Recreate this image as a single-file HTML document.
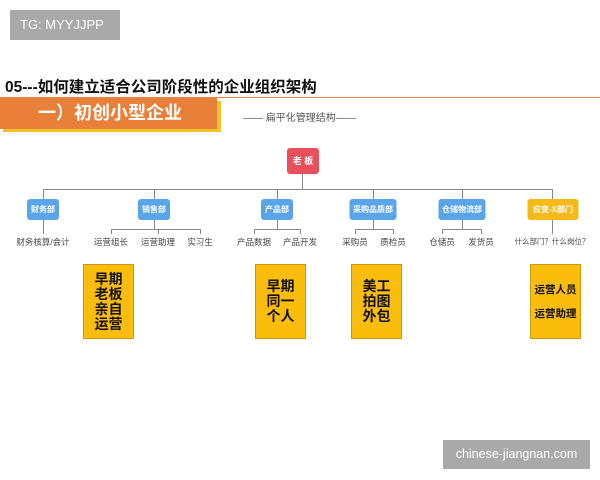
<!DOCTYPE html>
<html><head><meta charset="utf-8"><style>
*{margin:0;padding:0;box-sizing:border-box}
body{width:600px;height:480px;background:#fff;position:relative;overflow:hidden;font-family:"Liberation Sans","Noto Sans CJK SC",sans-serif}
.a{position:absolute}
.dept{position:absolute;top:199px;height:21px;background:#5aa5ea;color:#fff;font-size:8px;font-weight:bold;border-radius:3px;text-align:center;line-height:21px;transform:translateX(-50%)}
.ln{position:absolute;background:#888}
.lab{position:absolute;top:236px;font-size:8.5px;color:#444;transform:translateX(-50%);white-space:nowrap}
.yb{position:absolute;top:264px;width:51px;height:75px;background:#fbbd0b;border:1px solid #c99a10;font-weight:bold;color:#111;text-align:center;font-size:14px;line-height:15px;display:flex;flex-direction:column;justify-content:center}
</style></head><body>
<div class="a" style="left:10px;top:10px;width:110px;height:30px;background:#a9a9a9;color:#fff;font-size:13px;line-height:30px;padding-left:10px">TG: MYYJJPP</div>
<div class="a" style="left:5px;top:75px;font-size:15.5px;font-weight:bold;color:#111;white-space:nowrap">05---如何建立适合公司阶段性的企业组织架构</div>
<div class="a" style="left:0;top:97px;width:600px;height:1px;background:#e8884a"></div>
<div class="a" style="left:3px;top:101px;width:218px;height:31px;background:#f6c12a"></div>
<div class="a" style="left:0;top:98px;width:217px;height:31px;background:#e8803a;color:#fff;font-size:18px;font-weight:bold;line-height:31px;padding-left:38px">一）初创小型企业</div>
<div class="a" style="left:243px;top:109px;font-size:10px;color:#555;white-space:nowrap">—— 扁平化管理结构——</div>
<div class="a" style="left:287px;top:148px;width:32px;height:26px;background:#e8505b;border-radius:3px;color:#fff;font-size:9px;font-weight:bold;text-align:center;line-height:26px">老 板</div>
<div class="ln" style="left:302px;top:174px;width:1px;height:15px"></div>
<div class="ln" style="left:43px;top:189px;width:510px;height:1px"></div>
<div class="ln" style="left:43px;top:189px;width:1px;height:10px"></div>
<div class="ln" style="left:154px;top:189px;width:1px;height:10px"></div>
<div class="ln" style="left:277px;top:189px;width:1px;height:10px"></div>
<div class="ln" style="left:373px;top:189px;width:1px;height:10px"></div>
<div class="ln" style="left:462px;top:189px;width:1px;height:10px"></div>
<div class="ln" style="left:552px;top:189px;width:1px;height:10px"></div>
<div class="dept" style="left:43px;width:32px">财务部</div>
<div class="dept" style="left:154px;width:32px">销售部</div>
<div class="dept" style="left:277px;width:32px">产品部</div>
<div class="dept" style="left:373px;width:47px">采购品质部</div>
<div class="dept" style="left:462px;width:47px">仓储物流部</div>
<div class="dept" style="left:553px;width:51px;background:#f6b91a">应变-X部门</div>
<!-- sub lines -->
<div class="ln" style="left:43px;top:220px;width:1px;height:14px"></div>
<div class="ln" style="left:154px;top:220px;width:1px;height:9px"></div>
<div class="ln" style="left:111px;top:229px;width:89px;height:1px"></div>
<div class="ln" style="left:111px;top:229px;width:1px;height:5px"></div>
<div class="ln" style="left:158px;top:229px;width:1px;height:5px"></div>
<div class="ln" style="left:200px;top:229px;width:1px;height:5px"></div>
<div class="ln" style="left:277px;top:220px;width:1px;height:9px"></div>
<div class="ln" style="left:254px;top:229px;width:47px;height:1px"></div>
<div class="ln" style="left:254px;top:229px;width:1px;height:5px"></div>
<div class="ln" style="left:300px;top:229px;width:1px;height:5px"></div>
<div class="ln" style="left:373px;top:220px;width:1px;height:9px"></div>
<div class="ln" style="left:355px;top:229px;width:39px;height:1px"></div>
<div class="ln" style="left:355px;top:229px;width:1px;height:5px"></div>
<div class="ln" style="left:393px;top:229px;width:1px;height:5px"></div>
<div class="ln" style="left:462px;top:220px;width:1px;height:9px"></div>
<div class="ln" style="left:442px;top:229px;width:40px;height:1px"></div>
<div class="ln" style="left:442px;top:229px;width:1px;height:5px"></div>
<div class="ln" style="left:481px;top:229px;width:1px;height:5px"></div>
<div class="ln" style="left:552px;top:220px;width:1px;height:14px"></div>
<div class="lab" style="left:43px">财务核算/会计</div>
<div class="lab" style="left:111px">运营组长</div>
<div class="lab" style="left:158px">运营助理</div>
<div class="lab" style="left:200px">实习生</div>
<div class="lab" style="left:254px">产品数据</div>
<div class="lab" style="left:300px">产品开发</div>
<div class="lab" style="left:355px">采购员</div>
<div class="lab" style="left:393px">质检员</div>
<div class="lab" style="left:442px">仓储员</div>
<div class="lab" style="left:481px">发货员</div>
<div class="lab" style="left:552px;font-size:7.5px">什么部门？什么岗位？</div>
<div class="yb" style="left:83px">早期<br>老板<br>亲自<br>运营</div>
<div class="yb" style="left:255px">早期<br>同一<br>个人</div>
<div class="yb" style="left:351px">美工<br>拍图<br>外包</div>
<div class="yb" style="left:530px;font-size:10.5px;line-height:24px">运营人员<br>运营助理</div>
<div class="a" style="left:443px;top:440px;width:147px;height:29px;background:#a9a9a9;color:#fff;font-size:12.5px;line-height:29px;text-align:center">chinese-jiangnan.com</div>
</body></html>
